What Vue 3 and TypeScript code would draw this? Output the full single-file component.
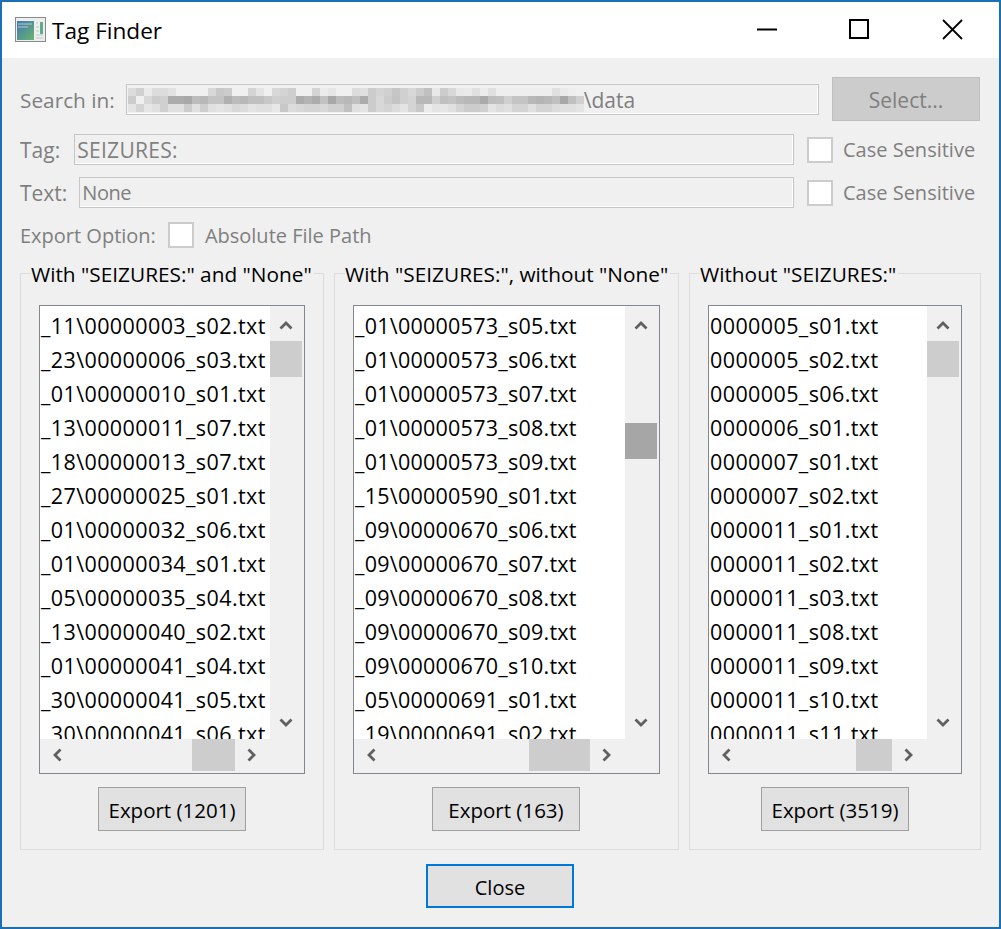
<template>
  <div class="window">
    <header class="titlebar">
      <svg class="app-icon" width="32" height="26" viewBox="0 0 32 26">
        <defs>
          <linearGradient id="pane" x1="0" y1="0" x2="1" y2="1">
            <stop offset="0" stop-color="#3f78b8" />
            <stop offset="1" stop-color="#68b56a" />
          </linearGradient>
        </defs>
        <rect x="0.5" y="0.5" width="30" height="24" fill="#eeeeee" stroke="#8a8a8a" />
        <rect x="2" y="4" width="17" height="19" fill="url(#pane)" />
        <rect x="25" y="5" width="3" height="12" fill="#5fae8a" />
        <path d="M3 7h14M3 10h10M21 6h2M21 10h3M21 14h3M21 18h7M21 21h7" stroke="#bcc8cc" fill="none" />
      </svg>
      <span class="title">Tag Finder</span>
      <div class="controls">
        <svg width="22" height="22" viewBox="0 0 22 22"><path d="M1 10.5h20" stroke="#000" stroke-width="2" /></svg>
        <svg width="22" height="22" viewBox="0 0 22 22"><rect x="1" y="1" width="18" height="18" fill="none" stroke="#000" stroke-width="2" /></svg>
        <svg width="22" height="22" viewBox="0 0 22 22"><path d="M1 1l19 19M20 1L1 20" stroke="#000" stroke-width="1.8" fill="none" /></svg>
      </div>
    </header>

    <main class="content">
      <div class="row row-search">
        <span class="label">Search in:</span>
        <div class="input input-path">
          <span class="mosaic">
            <i v-for="(c, i) in mosaic" :key="i" :style="{ background: c }"></i>
          </span>
          <span>\data</span>
        </div>
        <button class="select-btn" type="button" disabled>Select...</button>
      </div>

      <div class="row row-tag">
        <span class="label">Tag:</span>
        <div class="input">SEIZURES:</div>
        <span class="check"></span>
        <span class="label check-label">Case Sensitive</span>
      </div>

      <div class="row row-text">
        <span class="label">Text:</span>
        <div class="input">None</div>
        <span class="check"></span>
        <span class="label check-label">Case Sensitive</span>
      </div>

      <div class="row row-export">
        <span class="label small">Export Option:</span>
        <span class="check"></span>
        <span class="label small">Absolute File Path</span>
      </div>

      <section class="groups">
        <div v-for="g in groups" :key="g.title" class="group">
          <span class="group-title">{{ g.title }}</span>
          <div class="listbox">
            <div class="list-top">
              <ul class="rows">
                <li v-for="r in g.rows" :key="r">{{ r }}</li>
              </ul>
              <div class="vbar">
                <svg class="arrow-up" width="14" height="9" viewBox="0 0 14 9"><path d="M1.5 7.5L7 2l5.5 5.5" /></svg>
                <div class="vthumb" :class="{ hot: g.hot }" :style="{ top: g.vTop + 'px' }"></div>
                <svg class="arrow-down" width="14" height="9" viewBox="0 0 14 9"><path d="M1.5 1.5L7 7l5.5-5.5" /></svg>
              </div>
            </div>
            <div class="hbar">
              <svg class="arrow-left" width="9" height="14" viewBox="0 0 9 14"><path d="M7.5 1.5L2 7l5.5 5.5" /></svg>
              <div class="hthumb" :style="{ left: g.hLeft + 'px', width: g.hWidth + 'px' }"></div>
              <svg class="arrow-right" width="9" height="14" viewBox="0 0 9 14"><path d="M1.5 1.5L7 7l-5.5 5.5" /></svg>
            </div>
          </div>
          <button class="btn export-btn" type="button">{{ g.button }}</button>
        </div>
      </section>

      <div class="footer">
        <button class="btn close-btn" type="button">Close</button>
      </div>
    </main>
  </div>
</template>

<script setup lang="ts">
interface Group {
  title: string;
  button: string;
  rows: string[];
  vTop: number;
  hot?: boolean;
  hLeft: number;
  hWidth: number;
}

const groups: Group[] = [
  {
    title: 'With "SEIZURES:" and "None"',
    button: 'Export (1201)',
    vTop: 35,
    hLeft: 152,
    hWidth: 43,
    rows: [
      '_11\\00000003_s02.txt', '_23\\00000006_s03.txt', '_01\\00000010_s01.txt',
      '_13\\00000011_s07.txt', '_18\\00000013_s07.txt', '_27\\00000025_s01.txt',
      '_01\\00000032_s06.txt', '_01\\00000034_s01.txt', '_05\\00000035_s04.txt',
      '_13\\00000040_s02.txt', '_01\\00000041_s04.txt', '_30\\00000041_s05.txt',
      '_30\\00000041_s06.txt',
    ],
  },
  {
    title: 'With "SEIZURES:", without "None"',
    button: 'Export (163)',
    vTop: 117,
    hot: true,
    hLeft: 175,
    hWidth: 61,
    rows: [
      '_01\\00000573_s05.txt', '_01\\00000573_s06.txt', '_01\\00000573_s07.txt',
      '_01\\00000573_s08.txt', '_01\\00000573_s09.txt', '_15\\00000590_s01.txt',
      '_09\\00000670_s06.txt', '_09\\00000670_s07.txt', '_09\\00000670_s08.txt',
      '_09\\00000670_s09.txt', '_09\\00000670_s10.txt', '_05\\00000691_s01.txt',
      '_19\\00000691_s02.txt',
    ],
  },
  {
    title: 'Without "SEIZURES:"',
    button: 'Export (3519)',
    vTop: 35,
    hLeft: 147,
    hWidth: 36,
    rows: [
      '0000005_s01.txt', '0000005_s02.txt', '0000005_s06.txt', '0000006_s01.txt',
      '0000007_s01.txt', '0000007_s02.txt', '0000011_s01.txt', '0000011_s02.txt',
      '0000011_s03.txt', '0000011_s08.txt', '0000011_s09.txt', '0000011_s10.txt',
      '0000011_s11.txt',
    ],
  },
];

// the redacted part of the path: three rows of 8px blocks, grey levels per block
const mosaicRows = [
  'dc d0 ea dc dc e2 f0 f0 f0 f0 d8 c8 cc f0 f0 d4 e4 f0 d8 d4 ce f0 f0 d4 ec e6 f0 f0 dc e0 cc d4 d0 c6 d0 d8 cc c0 e8 cc d8 e8 ea e0 ec e0 ee ee ee ee ee ee ee e0 ea ee f0',
  'cc f0 d8 cc d0 ac ac a8 bc b8 c4 c4 b0 bc b8 c0 c0 c8 d0 ce ce ac b4 ac c2 a8 bc b8 c0 ac cc d8 cc c4 d0 d4 b8 b8 d0 c0 c4 bc b8 b8 aa be c0 d0 c4 c4 b8 b4 b8 c0 a8 c0 d0',
  'e4 d4 e6 e0 d0 e0 e0 cc e0 ce e0 e4 e0 d8 dc e4 e0 e0 e8 c8 dc d8 d4 d4 d8 d0 d0 c0 e0 e4 cc d8 d4 dc e4 d4 c8 ec e4 e6 e0 d4 cc cc d0 e4 dc e0 d4 d4 e0 d4 d4 dc e0 e0 e4',
];
const mosaic: string[] = mosaicRows.flatMap((row) => row.split(' ').map((v) => `#${v}${v}${v}`));
</script>

<style>
body {
  margin: 0;
}
</style>

<style scoped>
.window {
  box-sizing: border-box;
  width: 1001px;
  height: 929px;
  border: 2px solid #1a6fb5;
  display: flex;
  flex-direction: column;
  background: #f0f0f0;
  font-family: "Open Sans", "Noto Sans", sans-serif;
  font-size: 21px;
  color: #000;
  overflow: hidden;
}

.titlebar {
  height: 56px;
  flex: none;
  background: #fff;
  display: flex;
  align-items: center;
  padding-left: 13px;
  gap: 5px;
}

.title {
  font-size: 22.6px;
}

.controls {
  margin-left: auto;
  display: flex;
  gap: 71px;
  padding-right: 35px;
  align-items: center;
}

.content {
  flex: 1;
  padding: 19px 18px 0;
  display: flex;
  flex-direction: column;
  min-height: 0;
}

.row {
  display: flex;
  align-items: center;
  flex: none;
}

.label {
  color: #7f7f7f;
  white-space: nowrap;
}

.small {
  font-size: 20px;
}

.input {
  box-sizing: border-box;
  flex: 1;
  height: 31px;
  border: 1px solid #c6c6c6;
  box-shadow: inset -1px -1px 0 #fff;
  color: #7f7f7f;
  padding: 0 0 0 2px;
  display: flex;
  align-items: center;
  overflow: hidden;
  white-space: nowrap;
}

.row-search {
  height: 44px;
}

.row-search .label {
  font-size: 20.8px;
  padding-top: 2px;
}

.row-search .input {
  margin-left: 11px;
  margin-right: 13px;
  padding: 2px 0 0 1px;
}

.mosaic {
  display: flex;
  flex-wrap: wrap;
  width: 456px;
  height: 24px;
  flex: none;
}

.mosaic i {
  display: block;
  width: 8px;
  height: 8px;
}

.select-btn {
  box-sizing: border-box;
  width: 148px;
  height: 44px;
  margin-right: 1px;
  border: 1px solid #bfbfbf;
  background: #cccccc;
  color: #7f7f7f;
  font: inherit;
  padding: 2px 0 0;
}

.row-tag {
  margin-top: 13px;
  height: 31px;
}

.row-text {
  margin-top: 12px;
  height: 31px;
}

.row-tag .input {
  margin-left: 14px;
  margin-right: 13px;
  letter-spacing: 0.3px;
}

.row-text .input {
  margin-left: 12px;
  margin-right: 13px;
  font-size: 20px;
  letter-spacing: -0.5px;
}

.check {
  box-sizing: border-box;
  flex: none;
  width: 26px;
  height: 26px;
  border: 2px solid #cccccc;
  background: #fff;
}

.check-label {
  box-sizing: content-box;
  flex: none;
  width: 134px;
  margin-left: 10px;
  margin-right: 4px;
  font-size: 20px;
}

.row-export {
  margin-top: 12px;
  height: 30px;
}

.row-export .check {
  margin: 0 11px 0 12px;
}

.groups {
  margin-top: 23px;
  display: grid;
  grid-template-columns: 304px 345px 292px;
  column-gap: 10px;
  height: 577px;
  flex: none;
}

.group {
  position: relative;
  box-sizing: border-box;
  border: 1px solid #dcdcdc;
  display: flex;
  flex-direction: column;
  align-items: stretch;
  padding: 31px 18px 0;
}

.group-title {
  position: absolute;
  left: 10px;
  top: -14px;
  background: #f0f0f0;
  white-space: nowrap;
  padding-right: 2px;
  line-height: 28px;
  font-size: 20.8px;
}

.listbox {
  box-sizing: border-box;
  height: 469px;
  border: 1px solid #828790;
  background: #f0f0f0;
  display: flex;
  flex-direction: column;
}

.list-top {
  height: 433px;
  display: flex;
  flex: none;
  overflow: hidden;
}

.rows {
  list-style: none;
  margin: 0;
  padding: 0 0 0 1px;
  flex: 1;
  min-width: 0;
  background: #fff;
  overflow: hidden;
}

.rows li {
  height: 34px;
  line-height: 40px;
  white-space: nowrap;
  font-size: 21.5px;
  letter-spacing: 0.4px;
}

.group:nth-child(2) .rows li {
  letter-spacing: 0.25px;
}

.vbar {
  position: relative;
  flex: none;
  width: 34px;
}

.vthumb {
  position: absolute;
  left: 0;
  width: 32px;
  height: 36px;
  background: #cdcdcd;
}

.vthumb.hot {
  background: #a6a6a6;
}

.hbar {
  position: relative;
  flex: 1;
}

.hthumb {
  position: absolute;
  top: 0;
  height: 32px;
  background: #cdcdcd;
}

.vbar svg,
.hbar svg {
  position: absolute;
  fill: none;
  stroke: #606060;
  stroke-width: 2.8;
}

.arrow-up {
  left: 9px;
  top: 15px;
}

.arrow-down {
  left: 9px;
  bottom: 12px;
}

.arrow-left {
  left: 13px;
  top: 9px;
}

.arrow-right {
  right: 48px;
  top: 9px;
}

.btn {
  box-sizing: border-box;
  width: 148px;
  height: 44px;
  border: 1px solid #a0a0a0;
  background: #e1e1e1;
  color: #000;
  font: inherit;
  font-size: 20.5px;
  padding: 2px 0 0;
}

.export-btn {
  align-self: center;
  margin-top: 13px;
}

.group:nth-child(2) .export-btn {
  margin-right: 1px;
}

.footer {
  display: flex;
  justify-content: center;
  margin-top: 14px;
  padding-right: 1px;
}

.close-btn {
  border: 2px solid #0078d7;
  font-size: 20px;
}
</style>
